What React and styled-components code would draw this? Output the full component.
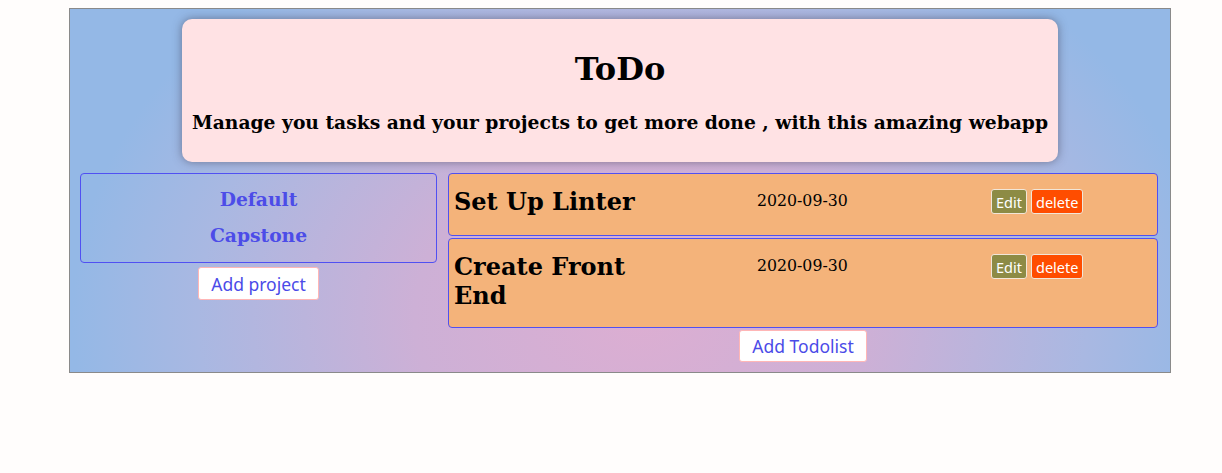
import React from "react";
import styled, { createGlobalStyle } from "styled-components";

const GlobalStyle = createGlobalStyle`
  body {
    margin: 8px;
    background: #fffdfc;
    font-family: "DejaVu Serif", serif;
  }
`;

const Wrapper = styled.main`
  width: 1100px;
  margin-left: 61px;
  border: 1px solid #8a8a8a;
  background: radial-gradient(ellipse 570px 440px at 52% 85%, #dcaed2 0%, #cdb0d6 40%, #a9b8e2 78%, #94b8e6 100%);
  padding: 10px 0 10px;
  display: flex;
  flex-direction: column;
  align-items: center;
`;

const Header = styled.header`
  width: 876px;
  height: 143px;
  background: #ffe2e4;
  border-radius: 10px;
  box-shadow: 0 0 10px rgba(60, 60, 80, 0.55);
  display: flex;
  flex-direction: column;
  align-items: center;
  & > h1 {
    margin: 31px 0 0;
    font-size: 32px;
    line-height: 38px;
  }
  & > h3 {
    margin: 23px 0 0;
    font-size: 18.72px;
    line-height: 22px;
  }
`;

const Content = styled.div`
  width: 100%;
  box-sizing: border-box;
  padding: 0 11px 0 10px;
  margin-top: 11px;
  display: flex;
  gap: 11px;
  align-items: flex-start;
`;

const Column = styled.section`
  width: ${(props) => props.width}px;
  display: flex;
  flex-direction: column;
  align-items: center;
  gap: ${(props) => props.gap}px;
`;

const ProjectList = styled.ul`
  list-style: none;
  margin: 0;
  padding: 14px 0 16px;
  width: 100%;
  box-sizing: border-box;
  border: 1px solid #5050f2;
  border-radius: 4px;
  display: flex;
  flex-direction: column;
  align-items: center;
  gap: 14px;
  & > li {
    color: #4c4ce8;
    font-weight: bold;
    font-size: 18.72px;
    line-height: 22px;
  }
`;

const AddButton = styled.button`
  background: #fff;
  border: 1px solid #ffb6b6;
  border-radius: 3px;
  color: #4b4be8;
  font-family: "Noto Sans", sans-serif;
  font-size: 17.5px;
  height: ${(props) => props.h}px;
  padding: 0 12px;
`;

const TodoCard = styled.article`
  width: 100%;
  box-sizing: border-box;
  min-height: ${(props) => props.h}px;
  background: #f4b37a;
  border: 1px solid #5050f2;
  border-radius: 4px;
  display: grid;
  grid-template-columns: 303px 234px auto;
  align-items: start;
  padding: 13px 0 0 5px;
`;

const TodoTitle = styled.h2`
  margin: 0;
  font-size: 24px;
  line-height: 29px;
  width: 200px;
`;

const TodoDate = styled.span`
  font-family: "DejaVu Serif", serif;
  font-stretch: condensed;
  font-size: 17.5px;
  line-height: 22px;
  margin-top: 2px;
`;

const Actions = styled.div`
  display: flex;
  gap: 4px;
  margin-top: 2px;
`;

const SmallBtn = styled.button`
  background: ${(props) => props.bg};
  color: #fff;
  border: 1px solid #f2e6d8;
  border-radius: 3px;
  height: 25px;
  padding: 0 4px;
  font-family: "Noto Sans", sans-serif;
  font-size: 14.5px;
`;

const todos = [
  { title: "Set Up Linter", date: "2020-09-30", h: 63 },
  { title: "Create Front End", date: "2020-09-30", h: 90 },
];

export default function App() {
  return (
    <>
      <GlobalStyle />
      <Wrapper>
        <Header>
          <h1>ToDo</h1>
          <h3>Manage you tasks and your projects to get more done , with this amazing webapp</h3>
        </Header>
        <Content>
          <Column width={357} gap={4}>
            <ProjectList>
              <li>Default</li>
              <li>Capstone</li>
            </ProjectList>
            <AddButton h={33}>Add project</AddButton>
          </Column>
          <Column width={710} gap={2}>
            {todos.map((t) => (
              <TodoCard key={t.title} h={t.h}>
                <TodoTitle>{t.title}</TodoTitle>
                <TodoDate>{t.date}</TodoDate>
                <Actions>
                  <SmallBtn bg="#8d8b45">Edit</SmallBtn>
                  <SmallBtn bg="#ff4d00">delete</SmallBtn>
                </Actions>
              </TodoCard>
            ))}
            <AddButton h={32}>Add Todolist</AddButton>
          </Column>
        </Content>
      </Wrapper>
    </>
  );
}
